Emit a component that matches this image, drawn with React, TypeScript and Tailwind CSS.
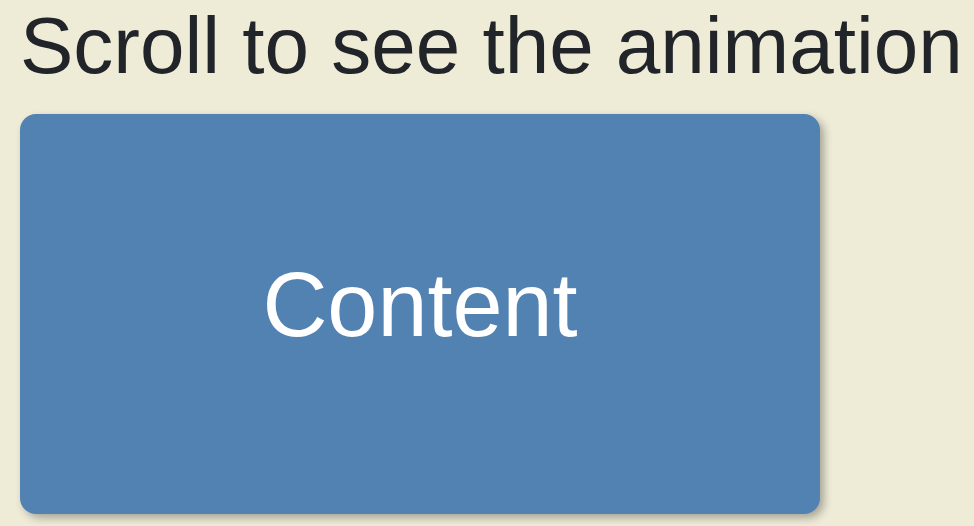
const App = () => {
  return (
    <div className="min-h-screen bg-[#eeebd7] px-5 font-['Liberation_Sans',Arial,sans-serif]">
      <h1 className="whitespace-nowrap text-[80px] leading-[92px] text-[#212529] font-normal">Scroll to see the animation</h1>
      <div className="mt-[22px] flex h-[400px] w-[800px] items-center justify-center rounded-2xl bg-[#5282b1] shadow-[4px_4px_8px_rgba(0,0,0,0.3)]">
        <span className="pb-[18px] text-[90px] leading-none text-white">Content</span>
      </div>
    </div>
  );
};

export default App;
